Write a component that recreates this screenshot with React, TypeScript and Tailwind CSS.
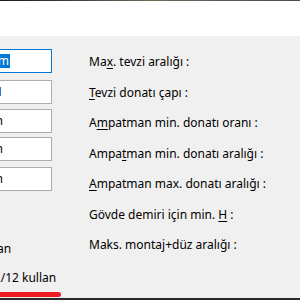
import React from "react";

const labels: { pre: string; key: string; post: string }[] = [
  { pre: "Ma", key: "x", post: ". tevzi aralığı :" },
  { pre: "", key: "T", post: "evzi donatı çapı :" },
  { pre: "A", key: "m", post: "patman min. donatı oranı :" },
  { pre: "Ampa", key: "t", post: "man min. donatı aralığı :" },
  { pre: "", key: "A", post: "mpatman max. donatı aralığı :" },
  { pre: "Gövde demiri için min. ", key: "H", post: " :" },
  { pre: "Maks. montaj+düz aralığı :", key: "", post: "" },
];

function Field({ text, pr, focused, mt }: { text: string; pr: string; focused?: boolean; mt: string }) {
  return (
    <div
      className={`flex h-[24px] w-[100px] ml-[-48px] items-center justify-end bg-white ${mt} ${
        focused ? "border border-[#0078d7]" : "border border-[#adadad]"
      } ${pr}`}
    >
      {focused ? (
        <span className="bg-[#0078d7] px-px leading-[14px] text-white">{text}</span>
      ) : (
        <span className="leading-[14px] text-black">{text}</span>
      )}
    </div>
  );
}

export default function App() {
  return (
    <div
      className="flex h-[300px] w-[300px] flex-col overflow-hidden bg-[#f0f0f0] text-[12px] text-black"
      style={{ fontFamily: '"Noto Sans", "Open Sans", sans-serif' }}
    >
      <div className="h-px bg-gradient-to-r from-[#1a1a1a] via-[#6b6b5a] to-[#4a4a4a]" />
      <div className="h-[35px] bg-white" />
      <div className="flex flex-1">
        <div className="flex w-[89px] flex-col">
          <Field text="m" pr="pr-[41px]" focused mt="mt-[13px]" />
          <Field text="1" pr="pr-[48px]" mt="mt-[7px]" />
          <Field text="m" pr="pr-[48px]" mt="mt-[5px]" />
          <Field text="m" pr="pr-[48px]" mt="mt-[4px]" />
          <Field text="m" pr="pr-[48px]" mt="mt-[6px]" />
          <div className="ml-[-23px] mt-[50px] leading-[16px] whitespace-nowrap">kullan</div>
          <div className="ml-[-13px] mt-[13px] leading-[16px] whitespace-nowrap">12/12 kullan</div>
          <div className="ml-[-4px] mt-[6px] h-[5px] w-[65px] rounded-full bg-[#ed1c24]" />
        </div>
        <div className="flex flex-col gap-[14.5px] pt-[18px]">
          {labels.map((l, i) => (
            <div key={i} className="leading-[16px] whitespace-nowrap">
              {l.pre}
              {l.key && <span className="underline underline-offset-2">{l.key}</span>}
              {l.post}
            </div>
          ))}
        </div>
      </div>
      <div className="h-[2px] bg-[#2a2a2a]" />
    </div>
  );
}
